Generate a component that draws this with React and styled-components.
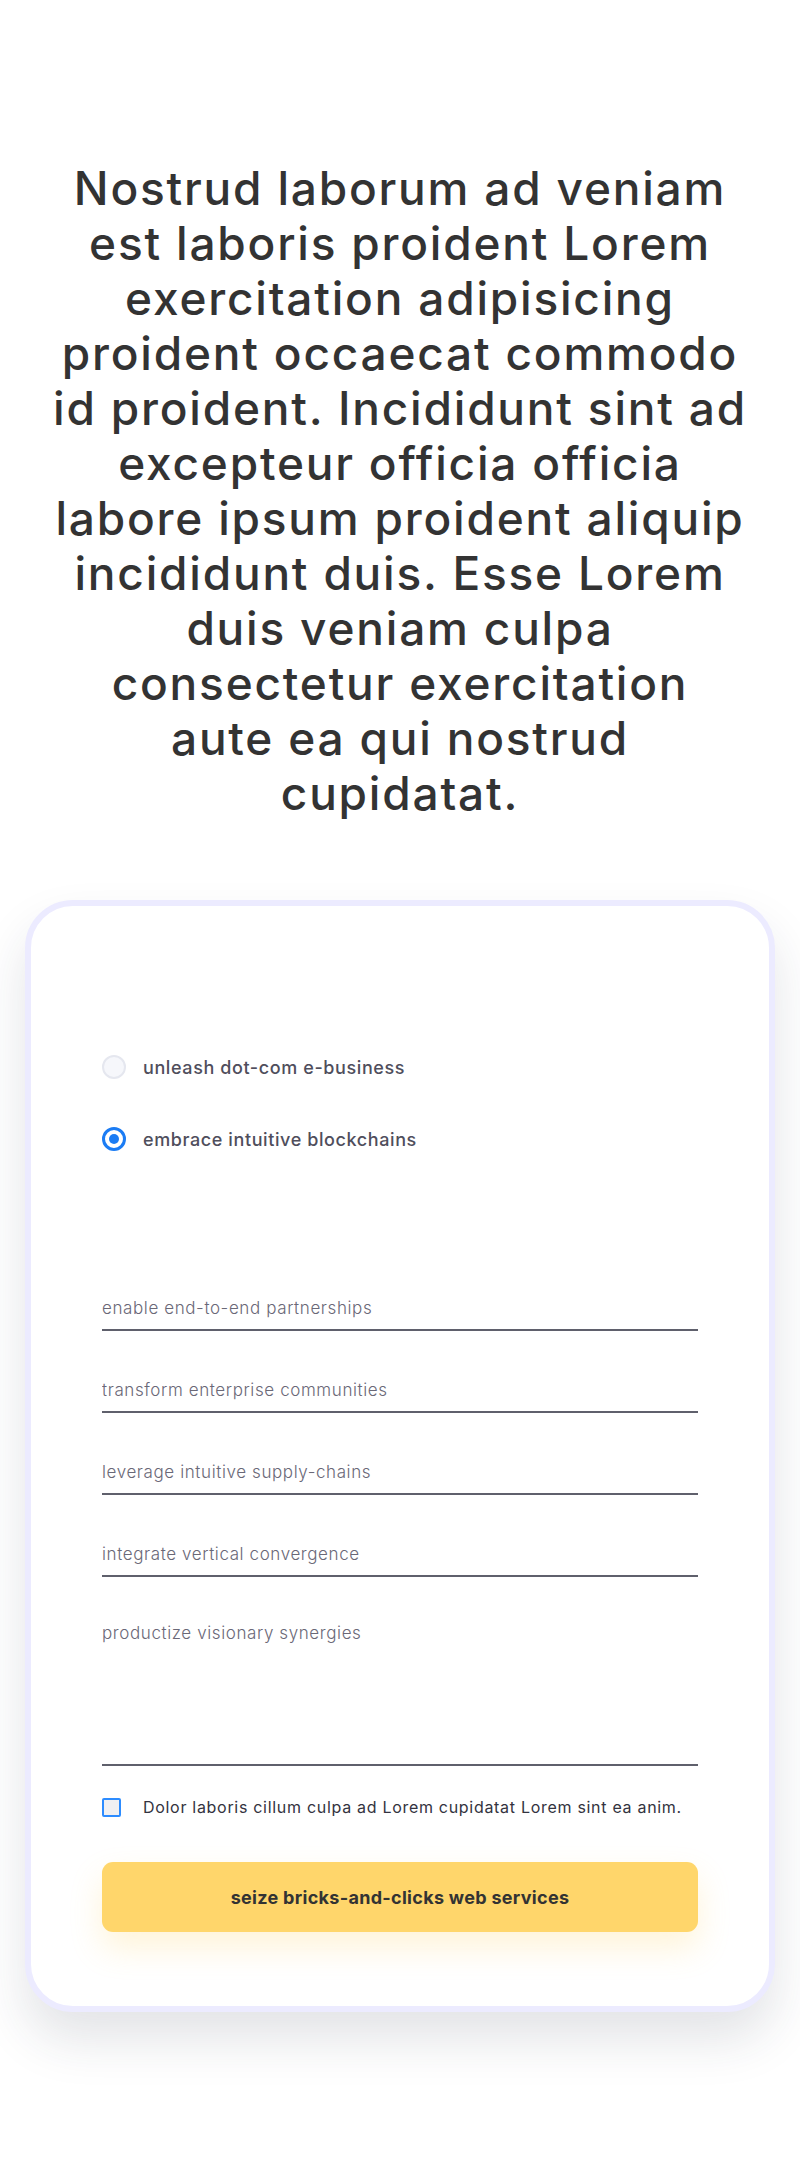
import React from "react";
import styled, { createGlobalStyle } from "styled-components";

const GlobalStyle = createGlobalStyle`
  * {
    box-sizing: border-box;
  }
  body {
    margin: 0;
    background: #fff;
    font-family: "Inter", "Noto Sans", sans-serif;
    color: #333;
  }
`;

const Page = styled.div`
  width: 800px;
  padding: 161px 0 160px;
`;

const Headline = styled.h1`
  margin: 0;
  padding: 0 40px;
  font-size: 46px;
  line-height: 55px;
  font-weight: 500;
  text-align: center;
  color: #333333;
  letter-spacing: 1.8px;
`;

const HeadlineLine = styled.span`
  display: block;
  white-space: nowrap;
`;

const Card = styled.form`
  margin: 79px 25px 0;
  border: 6px solid #ecebff;
  border-radius: 48px;
  background: #fff;
  padding: 71px 71px 74px;
  box-shadow: 0 28px 50px rgba(40, 50, 70, 0.13);
  display: flex;
  flex-direction: column;
`;

const RadioGroup = styled.div`
  padding-top: 78px;
  display: flex;
  flex-direction: column;
  gap: 48px;
`;

const RadioRow = styled.label`
  display: flex;
  align-items: center;
  gap: 17px;
  height: 24px;
  font-size: 18px;
  font-weight: 500;
  letter-spacing: 0.6px;
  color: #4f4e5c;
  cursor: pointer;
`;

const RadioDot = styled.span`
  width: 24px;
  height: 24px;
  border-radius: 50%;
  flex-shrink: 0;
  border: ${(p) => (p.$checked ? "3px solid #1b7cf4" : "2px solid #e5e7ef")};
  background: ${(p) => (p.$checked ? "#fff" : "#f6f7fb")};
  display: flex;
  align-items: center;
  justify-content: center;

  &::after {
    content: "";
    width: 10px;
    height: 10px;
    border-radius: 50%;
    background: #1b7cf4;
    display: ${(p) => (p.$checked ? "block" : "none")};
  }
`;

const Fields = styled.div`
  margin-top: 136px;
  display: flex;
  flex-direction: column;
  gap: 38px;
`;

const Input = styled.input`
  display: block;
  width: 100%;
  border: none;
  border-bottom: 2px solid #5f606c;
  padding: 11px 0 11px;
  font-family: inherit;
  font-size: 17px;
  line-height: 20px;
  font-weight: 300;
  letter-spacing: 0.6px;
  color: #333;
  outline: none;
  background: transparent;

  &::placeholder {
    color: #6a6877;
  }
`;

const TextArea = styled.textarea`
  display: block;
  width: 100%;
  height: 151px;
  resize: none;
  border: none;
  border-bottom: 2px solid #5f606c;
  padding: 8px 0;
  font-family: inherit;
  font-size: 17px;
  line-height: 20px;
  font-weight: 300;
  letter-spacing: 0.6px;
  color: #333;
  outline: none;
  background: transparent;

  &::placeholder {
    color: #6a6877;
  }
`;

const CheckRow = styled.label`
  margin-top: 31px;
  display: flex;
  align-items: center;
  gap: 22px;
  font-size: 16px;
  letter-spacing: 0.7px;
  color: #333340;
`;

const CheckBox = styled.span`
  width: 19px;
  height: 19px;
  flex-shrink: 0;
  border: 2px solid #2d8cff;
  border-radius: 2px;
  background: #f0f0f2;
`;

const SubmitButton = styled.button`
  margin-top: 45px;
  height: 70px;
  border: none;
  border-radius: 11px;
  background: #ffd66b;
  box-shadow: 0 16px 32px rgba(255, 205, 80, 0.22);
  font-family: inherit;
  font-size: 18px;
  font-weight: 700;
  letter-spacing: 0.3px;
  color: #333;
  cursor: pointer;
`;

const headline = [
  "Nostrud laborum ad veniam",
  "est laboris proident Lorem",
  "exercitation adipisicing",
  "proident occaecat commodo",
  "id proident. Incididunt sint ad",
  "excepteur officia officia",
  "labore ipsum proident aliquip",
  "incididunt duis. Esse Lorem",
  "duis veniam culpa",
  "consectetur exercitation",
  "aute ea qui nostrud",
  "cupidatat.",
];

const fields = [
  "enable end-to-end partnerships",
  "transform enterprise communities",
  "leverage intuitive supply-chains",
  "integrate vertical convergence",
];

export default function App() {
  return (
    <Page>
      <GlobalStyle />
      <Headline>
        {headline.map((line) => (
          <HeadlineLine key={line}>{line} </HeadlineLine>
        ))}
      </Headline>
      <Card onSubmit={(e) => e.preventDefault()}>
        <RadioGroup>
          <RadioRow>
            <RadioDot />
            unleash dot-com e-business
          </RadioRow>
          <RadioRow>
            <RadioDot $checked />
            embrace intuitive blockchains
          </RadioRow>
        </RadioGroup>
        <Fields>
          {fields.map((f) => (
            <Input key={f} type="text" placeholder={f} />
          ))}
          <TextArea placeholder="productize visionary synergies" />
        </Fields>
        <CheckRow>
          <CheckBox />
          Dolor laboris cillum culpa ad Lorem cupidatat Lorem sint ea anim.
        </CheckRow>
        <SubmitButton type="submit">seize bricks-and-clicks web services</SubmitButton>
      </Card>
    </Page>
  );
}
